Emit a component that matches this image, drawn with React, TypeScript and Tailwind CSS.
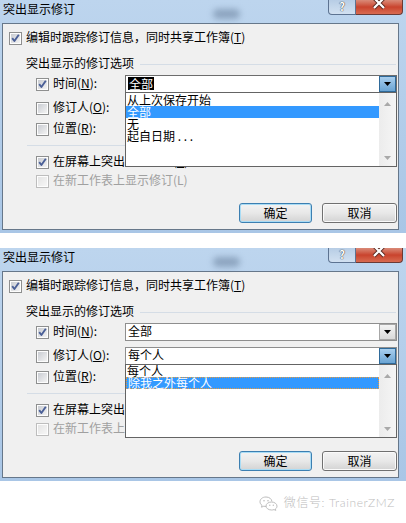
import React from "react";

function Check({ checked, disabled }: { checked?: boolean; disabled?: boolean }) {
  const id = "g" + React.useId().replace(/[^a-zA-Z0-9]/g, "");
  return (
    <svg width="13" height="13" viewBox="0 0 13 13" className="shrink-0 block">
      <defs>
        <linearGradient id={id} x1="0" y1="0" x2="1" y2="1">
          <stop offset="0" stopColor={disabled ? "#e4e4e4" : "#c9ccd2"} />
          <stop offset="1" stopColor={disabled ? "#f6f6f6" : "#f3f3f3"} />
        </linearGradient>
      </defs>
      <rect x="0.5" y="0.5" width="12" height="12" fill="#fdfdfd" stroke={disabled ? "#bdbdbd" : "#8e8f8f"} />
      <rect x="2" y="2" width="9" height="9" fill={`url(#${id})`} />
      {checked && (
        <path d="M3.2 6.2 L5.4 9 L9.8 2.8" stroke="#4a5f97" strokeWidth="1.9" fill="none" strokeLinejoin="round" />
      )}
    </svg>
  );
}

function Arrow({ hot }: { hot?: boolean }) {
  return (
    <div
      className={
        "flex h-[16px] w-[17px] shrink-0 items-center justify-center border " +
        (hot
          ? "border-[#2f6a9a] bg-gradient-to-b from-[#a9cfee] to-[#6aa4d3]"
          : "border-[#a7a7a7] bg-gradient-to-b from-[#f4f4f4] to-[#d9d9d9]")
      }
    >
      <svg width="7" height="4" viewBox="0 0 7 4" className="block">
        <path d="M0 0 H7 L3.5 4 Z" fill="#000" />
      </svg>
    </div>
  );
}

function Combo({ text, selected, hot, children }: { text: string; selected?: boolean; hot?: boolean; children?: React.ReactNode }) {
  return (
    <div className="relative h-[18px] w-[272px] shrink-0">
      <div className={"flex h-[18px] w-[272px] items-center border bg-white " + (selected ? "border-[#6d6d6d]" : "border-[#8e8e8e]")}>
        <div className="flex flex-1 items-center pb-[2px] pl-[2px]">
          <span className={selected ? "bg-black px-[1px] pt-[1px] text-white" : ""}>{text}</span>
        </div>
        <Arrow hot={hot} />
      </div>
      {children}
    </div>
  );
}

function DropList({ items, sel, dotted, hClass, ptClass }: { items: string[]; sel: number; dotted?: boolean; hClass: string; ptClass: string }) {
  return (
    <div className={"absolute left-0 top-[17px] z-50 flex w-[272px] border border-[#646464] bg-white " + hClass}>
      <div className={"flex flex-1 flex-col " + ptClass}>
        {items.map((t, i) => (
          <div
            key={i}
            className={
              "flex h-[12px] items-center pl-[1px] " +
              (i === sel
                ? "bg-[#3399ff] text-white " + (dotted ? "border border-dotted border-[#e89a3c]" : "")
                : "text-black")
            }
          >
            <span className="leading-[12px]">{t}</span>
          </div>
        ))}
      </div>
      <div className="flex w-[17px] flex-col items-center justify-between bg-gradient-to-r from-[#ececec] to-[#f5f5f5] pb-[6px] pt-[9px]">
        <svg width="7" height="4" viewBox="0 0 7 4" className="block">
          <path d="M0 4 H7 L3.5 0 Z" fill="#a9a9a9" />
        </svg>
        <svg width="7" height="4" viewBox="0 0 7 4" className="block">
          <path d="M0 0 H7 L3.5 4 Z" fill="#a9a9a9" />
        </svg>
      </div>
    </div>
  );
}

function Btn({ label, def, w }: { label: string; def?: boolean; w: string }) {
  return (
    <div
      className={
        "flex h-[20px] items-center justify-center rounded-[3px] border bg-gradient-to-b from-[#f3f3f3] via-[#e8e8e8] to-[#d3d3d3] pb-[1px] text-black " +
        w +
        (def ? " border-[#3c7fb1] shadow-[inset_0_0_0_1px_#a9dcf5]" : " border-[#707070] shadow-[inset_0_0_0_1px_#fafafa]")
      }
    >
      {label}
    </div>
  );
}

function Label({ children, disabled }: { children: React.ReactNode; disabled?: boolean }) {
  return <span className={"block whitespace-nowrap pb-[3px] " + (disabled ? "text-[#a0a0a0]" : "text-black")}>{children}</span>;
}

function Dialog({ variant }: { variant: 1 | 2 }) {
  const list1 = (
    <DropList items={["从上次保存开始", "全部", "无", "起自日期 . . ."]} sel={1} hClass="h-[75px]" ptClass="pt-[1px]" />
  );
  const list2 = <DropList items={["每个人", "除我之外每个人"]} sel={1} dotted hClass="h-[74px]" ptClass="pt-0" />;
  return (
    <div className="flex h-[233px] w-[406px] shrink-0 flex-col bg-gradient-to-b from-[#bdd5ee] to-[#a9c6e6]">
      <div className="flex h-[23px] shrink-0">
        <div className="pl-[3px] pt-[3px] leading-[12px] text-black">突出显示修订</div>
        <div className="ml-[138px] mt-[9px] h-[10px] w-[27px] rounded-full bg-[#6c84a0] opacity-60 blur-[3px]" />
        <div className="flex-1" />
        <div className="mr-[3px] flex h-[15px]">
          <div className="flex w-[28px] justify-center overflow-hidden rounded-bl-[4px] border border-t-0 border-[#5d7391] bg-gradient-to-b from-[#b7cde5] to-[#d2e1f1]">
            <span className="text-[11px] font-bold leading-[13px] text-white [text-shadow:0_0_1px_#333,0_0_1px_#333]">?</span>
          </div>
          <div className="flex w-[47px] justify-center overflow-hidden rounded-br-[4px] border border-l-0 border-t-0 border-[#6b3a35] bg-gradient-to-b from-[#d98a78] via-[#c9432d] to-[#d86a50]">
            <svg width="14" height="12" viewBox="0 0 14 12" className="-mt-[2px] block">
              <path d="M2 0 L12 10 M12 0 L2 10" stroke="#5a2a22" strokeWidth="4" />
              <path d="M2 0 L12 10 M12 0 L2 10" stroke="#fff" strokeWidth="2.2" />
            </svg>
          </div>
        </div>
      </div>
      <div className="ml-[2px] mr-[7px] flex h-[207px] shrink-0 flex-col border border-[#66778a] bg-[#f0f0f0]">
        <div className="mt-[8px] flex h-[13px] shrink-0 items-center pl-[6px]">
          <Check checked />
          <span className="ml-[4px]">
            <Label>
              编辑时跟踪修订信息，同时共享工作簿(<u>T</u>)
            </Label>
          </span>
        </div>
        <div className="mt-[13px] flex h-[12px] shrink-0 items-center pl-[23px]">
          <Label>突出显示的修订选项</Label>
          <div className="ml-[6px] mr-[2px] h-px flex-1 bg-[#d5dde6]" />
        </div>
        <div className="mt-[5px] flex h-[18px] shrink-0 items-center pl-[33px]">
          <Check checked />
          <div className="ml-[4px] w-[72px]">
            <Label>
              时间(<u>N</u>):
            </Label>
          </div>
          <Combo text="全部" selected={variant === 1} hot={variant === 1}>
            {variant === 1 ? list1 : null}
          </Combo>
        </div>
        <div className="mt-[6px] flex h-[18px] shrink-0 items-center pl-[33px]">
          <Check />
          <div className="ml-[4px] w-[72px]">
            <Label>
              修订人(<u>O</u>):
            </Label>
          </div>
          <Combo text="每个人" hot={variant === 2}>
            {variant === 2 ? list2 : null}
          </Combo>
        </div>
        <div className="mt-[3px] flex h-[18px] shrink-0 items-center pl-[33px]">
          <Check />
          <div className="ml-[4px] w-[72px]">
            <Label>
              位置(<u>R</u>):
            </Label>
          </div>
          <div className="h-[18px] w-[272px] border border-[#8e8e8e] bg-white" />
        </div>
        <div className="ml-[24px] mr-[2px] mt-[7px] h-px shrink-0 bg-[#d5dde6]" />
        <div className="mt-[10px] flex h-[13px] shrink-0 items-center pl-[33px]">
          <Check checked />
          <span className="ml-[4px]">
            <Label>
              在屏幕上突出显示修订(<u>S</u>)
            </Label>
          </span>
        </div>
        <div className="mt-[6px] flex h-[13px] shrink-0 items-center pl-[33px]">
          <Check disabled />
          <span className="ml-[4px]">
            <Label disabled>在新工作表上显示修订(L)</Label>
          </span>
        </div>
        <div className="mt-[15px] flex shrink-0 justify-end gap-[10px] pr-[1px]">
          <Btn label="确定" def w="w-[73px]" />
          <Btn label="取消" w="w-[75px]" />
        </div>
      </div>
    </div>
  );
}

export default function App() {
  return (
    <div className="flex h-[523px] w-[406px] flex-col bg-white font-['Noto_Sans_CJK_SC','Noto_Sans',sans-serif] text-[12px] leading-[12px]">
      <Dialog variant={1} />
      <div className="mt-[15px] shrink-0">
        <Dialog variant={2} />
      </div>
      <div className="mt-[15px] flex h-[14px] shrink-0 items-center justify-end pr-[11px] text-[#bdbdbd]">
        <svg width="19" height="15" viewBox="0 0 19 15" className="block">
          <path d="M7 1 C3.3 1 1 3.2 1 5.8 C1 7.3 1.8 8.5 3 9.3 L2.5 11.2 L4.8 10.2 C5.5 10.4 6.2 10.5 7 10.5" fill="none" stroke="#bdbdbd" strokeWidth="1" />
          <path d="M7 1 C10.4 1 12.7 3 12.9 5.4" fill="none" stroke="#bdbdbd" strokeWidth="1" />
          <circle cx="5" cy="4.8" r="0.8" fill="#bdbdbd" />
          <circle cx="9" cy="4.8" r="0.8" fill="#bdbdbd" />
          <path d="M12.5 6 C15.6 6 18 7.9 18 10.1 C18 11.3 17.4 12.3 16.4 13 L16.8 14.4 L15 13.6 C14.2 13.9 13.4 14 12.5 14 C9.4 14 7 12.2 7 10 C7 7.8 9.4 6 12.5 6 Z" fill="none" stroke="#bdbdbd" strokeWidth="1" />
          <circle cx="10.8" cy="9.3" r="0.7" fill="#bdbdbd" />
          <circle cx="14.3" cy="9.3" r="0.7" fill="#bdbdbd" />
        </svg>
        <span className="ml-[6px] font-['Lato','Noto_Sans_CJK_SC',sans-serif] text-[12px] font-light leading-[14px] tracking-[0.6px]">
          微信号: TrainerZMZ
        </span>
      </div>
    </div>
  );
}
